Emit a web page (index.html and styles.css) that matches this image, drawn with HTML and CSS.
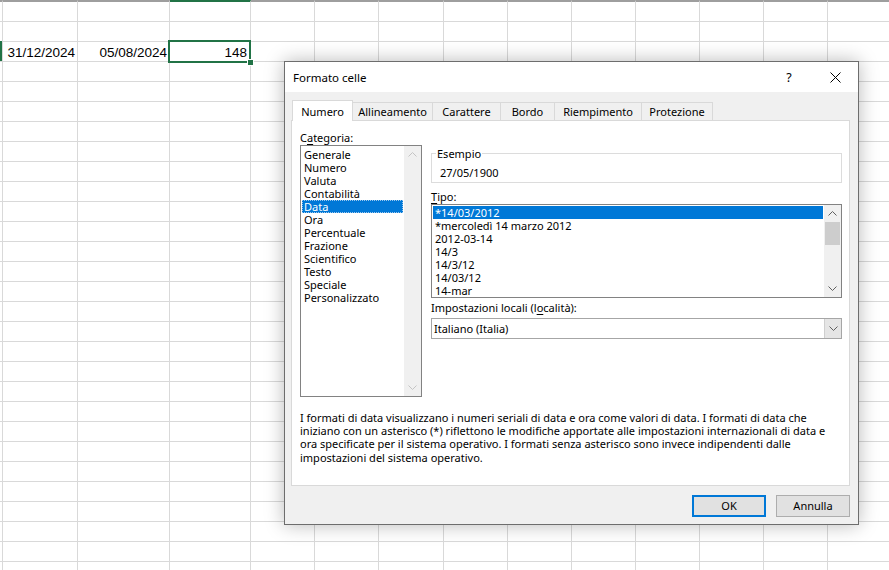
FILE: index.html
```html
<!DOCTYPE html>
<html lang="it">
<head>
<meta charset="utf-8">
<title>Formato celle</title>
<link rel="stylesheet" href="styles.css">
</head>
<body>
<div class="sheet">
  <div class="col w3"><div class="r3 rowmark"></div></div>
  <div class="col w75"><div class="r3 num">31/12/2024</div></div>
  <div class="col w92"><div class="r3 num">05/08/2024</div></div>
  <div class="col w81 colsel"><div class="r3 num selected">148<span class="handle"></span></div></div>
  <div class="col w64"></div>
  <div class="col w64"></div>
  <div class="col w65"></div>
  <div class="col w64"></div>
  <div class="col w64"></div>
  <div class="col w64"></div>
  <div class="col w64"></div>
  <div class="col w64"></div>
  <div class="col w64"></div>
  <div class="col w64"></div>
</div>

<div class="dialog">
  <div class="titlebar">
    <span class="title">Formato celle</span>
    <span class="tbtn help">?</span>
    <span class="tbtn close"><svg width="11" height="11" viewBox="0 0 11 11"><path d="M0.5 0.5 L10.5 10.5 M10.5 0.5 L0.5 10.5" stroke="#000" stroke-width="1" fill="none"/></svg></span>
  </div>
  <div class="dbody">
    <div class="tabs">
      <div class="tab active t1">Numero</div>
      <div class="tab t2">Allineamento</div>
      <div class="tab t3">Carattere</div>
      <div class="tab t4">Bordo</div>
      <div class="tab t5">Riempimento</div>
      <div class="tab t6">Protezione</div>
    </div>
    <div class="panel">
      <div class="cols">
        <div class="leftcol">
          <div class="lbl">C<u>a</u>tegoria:</div>
          <div class="list catlist">
            <div class="items">
              <div class="item">Generale</div>
              <div class="item">Numero</div>
              <div class="item">Valuta</div>
              <div class="item">Contabilità</div>
              <div class="item sel focus">Data</div>
              <div class="item">Ora</div>
              <div class="item">Percentuale</div>
              <div class="item">Frazione</div>
              <div class="item">Scientifico</div>
              <div class="item">Testo</div>
              <div class="item">Speciale</div>
              <div class="item">Personalizzato</div>
            </div>
            <div class="scroll disabled">
              <div class="arrow"><svg width="9" height="5" viewBox="0 0 9 5"><polyline points="0.5,4.5 4.5,0.5 8.5,4.5" fill="none" stroke="#c4c4c4"/></svg></div>
              <div class="track"></div>
              <div class="arrow"><svg width="9" height="5" viewBox="0 0 9 5"><polyline points="0.5,0.5 4.5,4.5 8.5,0.5" fill="none" stroke="#c4c4c4"/></svg></div>
            </div>
          </div>
        </div>
        <div class="rightcol">
          <fieldset class="group">
            <legend>Esempio</legend>
            <div class="sample">27/05/1900</div>
          </fieldset>
          <div class="lbl tipo-lbl"><u>T</u>ipo:</div>
          <div class="list tipolist">
            <div class="items">
              <div class="item sel">*14/03/2012</div>
              <div class="item">*mercoledì 14 marzo 2012</div>
              <div class="item">2012-03-14</div>
              <div class="item">14/3</div>
              <div class="item">14/3/12</div>
              <div class="item">14/03/12</div>
              <div class="item">14-mar</div>
            </div>
            <div class="scroll">
              <div class="arrow"><svg width="9" height="5" viewBox="0 0 9 5"><polyline points="0.5,4.5 4.5,0.5 8.5,4.5" fill="none" stroke="#606060"/></svg></div>
              <div class="track"><div class="thumb"></div></div>
              <div class="arrow"><svg width="9" height="5" viewBox="0 0 9 5"><polyline points="0.5,0.5 4.5,4.5 8.5,0.5" fill="none" stroke="#606060"/></svg></div>
            </div>
          </div>
          <div class="lbl loc-lbl">Impostazioni locali (l<u>o</u>calità):</div>
          <div class="combo">
            <span class="combo-text">Italiano (Italia)</span>
            <span class="combo-btn"><svg width="9" height="5" viewBox="0 0 9 5"><polyline points="0.5,0.5 4.5,4.5 8.5,0.5" fill="none" stroke="#606060"/></svg></span>
          </div>
        </div>
      </div>
      <p class="desc">I formati di data visualizzano i numeri seriali di data e ora come valori di data. I formati di data che<br>iniziano con un asterisco (*) riflettono le modifiche apportate alle impostazioni internazionali di data e<br>ora specificate per il sistema operativo. I formati senza asterisco sono invece indipendenti dalle<br>impostazioni del sistema operativo.</p>
    </div>
    <div class="buttons">
      <div class="btn default">OK</div>
      <div class="btn">Annulla</div>
    </div>
  </div>
</div>
</body>
</html>
```

FILE: styles.css
```css
html, body {
  margin: 0;
  padding: 0;
}
body {
  width: 889px;
  height: 570px;
  overflow: hidden;
  position: relative;
  background: #fff;
  font-family: "Liberation Sans", Arial, sans-serif;
}

/* ---------- spreadsheet ---------- */
.sheet {
  display: flex;
  height: 570px;
  background-image: repeating-linear-gradient(to bottom, transparent 0 19px, #d9d9d9 19px 20px);
  background-position: 0 2px;
}
.col {
  flex: none;
  box-sizing: border-box;
  height: 570px;
  border-top: 2px solid #9e9e9e;
  border-right: 1px solid #d9d9d9;
}
.w3 { width: 3px; }
.w75 { width: 75px; }
.w92 { width: 92px; }
.w81 { width: 81px; }
.w64 { width: 64px; }
.w65 { width: 65px; }
.colsel { border-top-color: #217346; }

.r3 {
  margin-top: 40px;
  height: 19px;
  line-height: 19px;
  padding-top: 1px;
}
.rowmark {
  margin-top: 39px;
  width: 2px;
  height: 20px;
  padding: 0;
  background: #217346;
}
.num {
  font-size: 13.5px;
  color: #000;
  text-align: right;
  padding-right: 2px;
}
.selected {
  position: relative;
  padding-right: 3px;
}
.selected::after {
  content: "";
  position: absolute;
  left: -2px;
  top: -2px;
  right: -1px;
  bottom: -1px;
  border: 2px solid #217346;
}
.handle {
  position: absolute;
  right: -4px;
  bottom: -4px;
  width: 5px;
  height: 5px;
  background: #217346;
  border: 1px solid #fff;
  z-index: 2;
}

/* ---------- dialog ---------- */
.dialog {
  position: absolute;
  left: 284px;
  top: 61px;
  width: 575px;
  height: 464px;
  box-sizing: border-box;
  border: 1px solid #6d6d6d;
  background: #f0f0f0;
  box-shadow: 0 0 18px rgba(0, 0, 0, 0.28);
  display: flex;
  flex-direction: column;
  font-family: "Noto Sans", "Open Sans", sans-serif;
  font-size: 11px;
  color: #000;
}
.titlebar {
  height: 30px;
  background: #fff;
  display: flex;
  align-items: center;
  padding-left: 8px;
}
.title {
  flex: 1;
  font-size: 11.5px;
}
.tbtn {
  width: 46px;
  height: 30px;
  display: flex;
  align-items: center;
  justify-content: center;
}
.help {
  font-size: 12.5px;
}
.dbody {
  flex: 1;
  padding: 8px 8px 0 6px;
  display: flex;
  flex-direction: column;
}
.tabs {
  display: flex;
  align-items: flex-end;
  height: 20px;
  padding-left: 1px;
  position: relative;
  z-index: 1;
}
.tab {
  box-sizing: border-box;
  height: 18px;
  line-height: 18px;
  text-align: center;
  border: 1px solid #d9d9d9;
  border-bottom: none;
  margin-right: -1px;
  background: #f0f0f0;
}
.tab.active {
  height: 21px;
  line-height: 22px;
  margin-bottom: -1px;
  background: #fff;
  position: relative;
  z-index: 2;
}
.t1 { width: 61px; }
.t2 { width: 81px; }
.t3 { width: 69px; }
.t4 { width: 55px; }
.t5 { width: 88px; }
.t6 { width: 72px; }

.panel {
  height: 366px;
  box-sizing: border-box;
  border: 1px solid #d9d9d9;
  background: #fff;
  padding: 9px 6px 0 8px;
}
.cols {
  display: flex;
  gap: 9px;
}
.leftcol {
  width: 122px;
}
.rightcol {
  width: 411px;
  padding-top: 16px;
}
.lbl {
  line-height: 15px;
  height: 15px;
}
u {
  text-decoration-thickness: 1px;
  text-underline-offset: 2px;
}

.list {
  box-sizing: border-box;
  border: 1px solid #828282;
  background: #fff;
  display: flex;
}
.catlist {
  height: 252px;
}
.items {
  flex: 1;
  padding: 1px;
}
.catlist .items {
  padding-top: 2px;
}
.item {
  height: 13px;
  line-height: 13px;
  padding-left: 2px;
  white-space: nowrap;
}
.item.sel {
  background: #0078d7;
  color: #fff;
}
.item.focus {
  box-sizing: border-box;
  outline: 1px dotted #9cc8ee;
  outline-offset: -1px;
}
.scroll {
  width: 17px;
  background: #f0f0f0;
  display: flex;
  flex-direction: column;
}
.arrow {
  height: 17px;
  display: flex;
  align-items: center;
  justify-content: center;
}
.track {
  flex: 1;
  padding: 0 1px;
}
.thumb {
  margin-top: 0;
  height: 23px;
  background: #cdcdcd;
}

.group {
  margin: 0;
  padding: 4px 0 2px 8px;
  border: 1px solid #dcdcdc;
  min-width: 0;
}
.group legend {
  padding: 0 1px;
  margin-left: -4px;
  line-height: 15px;
}
.sample {
  line-height: 15px;
}
.tipo-lbl {
  margin-top: 6px;
}
.tipolist {
  height: 94px;
}
.loc-lbl {
  margin-top: 2px;
}
.combo {
  margin-top: 3px;
  height: 21px;
  box-sizing: border-box;
  border: 1px solid #a6a6a6;
  background: #fff;
  display: flex;
  align-items: stretch;
}
.combo-text {
  flex: 1;
  line-height: 19px;
  padding-left: 2px;
}
.combo-btn {
  width: 16px;
  background: #e5e5e5;
  border-left: 1px solid #cfcfcf;
  display: flex;
  align-items: center;
  justify-content: center;
}

.desc {
  margin: 14px 0 0 0;
  line-height: 13.2px;
  white-space: nowrap;
}

.buttons {
  margin-top: 9px;
  display: flex;
  justify-content: flex-end;
  gap: 10px;
}
.btn {
  box-sizing: border-box;
  width: 74px;
  height: 22px;
  line-height: 20px;
  text-align: center;
  background: #e1e1e1;
  border: 1px solid #adadad;
}
.btn.default {
  border: 2px solid #0078d7;
  line-height: 18px;
}
```
